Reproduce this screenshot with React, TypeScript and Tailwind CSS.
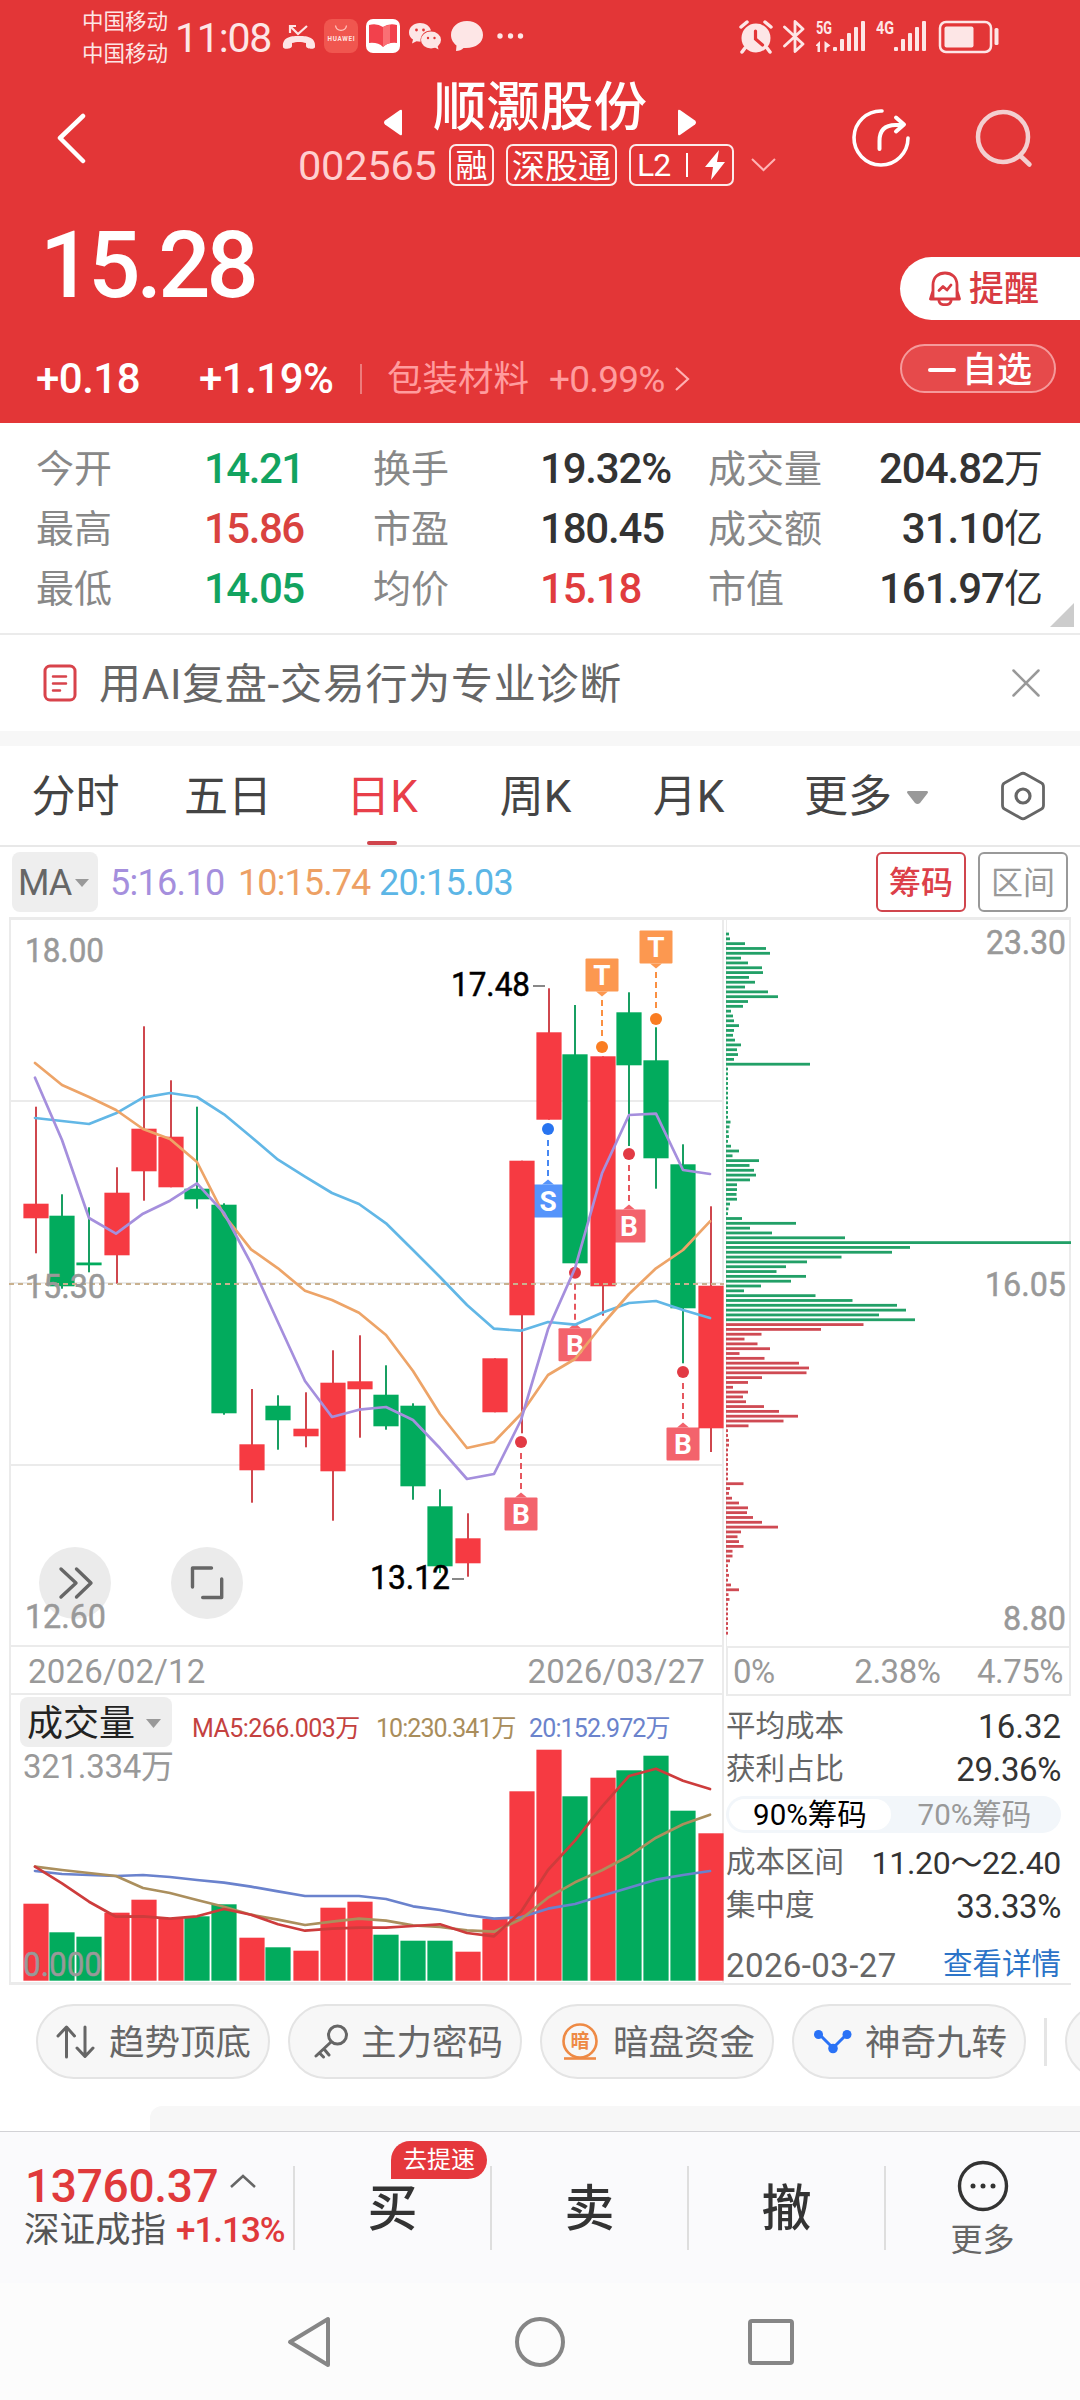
import React from 'react';

const RED = '#f63a42';
const GREEN = '#02ab5d';

const xAt = (i: number) => 35 + 27 * i;

const toPoints = (values: number[]) => values.map((y, i) => `${xAt(i)},${y}`).join(' ');

// [center x, high, body top, body bottom, low, up]
const candles: [number, number, number, number, number, boolean][] = [
  [36, 1106.7, 1203.7, 1218.3, 1253.3, true],
  [62, 1194.3, 1215.7, 1286.3, 1288.7, false],
  [89, 1207.3, 1262.5, 1265.3, 1272.3, false],
  [117, 1167.3, 1192.7, 1255.3, 1283.7, true],
  [144, 1026.3, 1128.7, 1171.3, 1200.7, true],
  [171, 1080.3, 1136.7, 1187.3, 1187.3, true],
  [197, 1106.7, 1188.7, 1199.3, 1208.7, false],
  [224, 1203.3, 1204.7, 1413.3, 1414.7, false],
  [252, 1389, 1444.3, 1470.3, 1502.7, true],
  [278, 1395.3, 1405.7, 1420.3, 1449.7, false],
  [306, 1392.3, 1428.7, 1436.3, 1447.3, true],
  [333, 1350.3, 1382.7, 1471.3, 1520.7, true],
  [360, 1335.3, 1381.3, 1389.3, 1437.7, true],
  [386, 1365.3, 1394.7, 1426.3, 1429.7, false],
  [413, 1403.3, 1405.7, 1486.3, 1499.7, false],
  [440, 1489.3, 1506.3, 1566.3, 1573, false],
  [468, 1513.3, 1538.3, 1563.3, 1576.7, true],
  [495, 1358.3, 1358.3, 1412.3, 1412.3, true],
  [522, 1160.7, 1160.7, 1315.3, 1433.3, true],
  [549, 988.3, 1032.3, 1119.7, 1119.7, true],
  [575, 1005, 1054.3, 1263.3, 1263.3, false],
  [603, 1056.3, 1056.3, 1286.3, 1315.7, true],
  [629, 992.3, 1012.3, 1065.3, 1146, false],
  [656, 1027.3, 1060.3, 1158.3, 1188.7, false],
  [683, 1144.3, 1164.3, 1308.3, 1363.3, false],
  [711, 1206.3, 1285.7, 1428.3, 1452, true],
];

const ma5 = [
  1077.7, 1140, 1218, 1233.7, 1213.7, 1200.7, 1183.3, 1213, 1263.3, 1322.3, 1381, 1417, 1409.7, 1407, 1420, 1448.3,
  1479, 1474, 1420, 1329.3, 1268.3, 1173.3, 1115, 1113.7, 1170, 1174,
];
const ma10 = [
  1063, 1085, 1097, 1110, 1129, 1139, 1162, 1215, 1249.3, 1268.3, 1290.7, 1300, 1312.7, 1335, 1371, 1414, 1448, 1442,
  1414, 1375, 1359, 1325, 1294, 1268.3, 1250, 1221.3,
];
const ma20 = [
  1118, 1121, 1124, 1113.3, 1097.7, 1093, 1097, 1114.3, 1136.7, 1159.7, 1176.7, 1193, 1204, 1223.3, 1250, 1277, 1305,
  1328.7, 1330.7, 1322, 1324.7, 1312.7, 1303, 1301, 1310, 1318,
];

const volumeTops = [
  1903.7, 1932.3, 1936.7, 1912.7, 1899.7, 1918.7, 1916.3, 1904.3, 1937.7, 1947.3, 1950.7, 1907.7, 1901.7, 1934.7,
  1940.7, 1940.7, 1951.7, 1918.7, 1791.3, 1749.7, 1796.3, 1777.7, 1770.3, 1755.7, 1810.7, 1833.3,
];
const vol5 = [
  1866.7, 1883.3, 1901.7, 1916.7, 1916.3, 1918.7, 1916.3, 1909, 1914.7, 1924.3, 1930.7, 1928.7, 1927.7, 1927.7, 1926,
  1924.3, 1933, 1936.3, 1911.7, 1870, 1840.7, 1806.7, 1776, 1768.7, 1780.7, 1789,
];
const vol10 = [
  1866.7, 1870, 1873, 1876, 1888, 1893, 1900, 1906.7, 1914.7, 1919.7, 1925, 1921.7, 1918.7, 1920.7, 1925.3, 1927,
  1930.3, 1931.7, 1919.3, 1897.7, 1882.3, 1870.3, 1856, 1837.7, 1824.3, 1814.7,
];
const vol20 = [
  1871, 1874, 1875, 1876, 1875, 1877, 1880, 1882.7, 1886.7, 1891.3, 1896, 1896, 1896, 1899, 1906.3, 1910, 1915,
  1918.7, 1917.3, 1908.7, 1904, 1895.7, 1887.7, 1879.7, 1875, 1871,
];

// widths of the cost distribution bars, top to bottom
const lossBars = [
  3, 4, 19, 40, 44, 15, 22, 36, 37, 23, 29, 19, 42, 52, 22, 17, 5, 7, 8, 13, 8, 7, 9, 15, 11, 12, 8, 84, 2, 2, 2, 2, 2,
  2, 2, 2, 2, 2, 2, 4.5, 3.5, 2.5, 3, 2, 5, 13, 6.5, 33, 23.5, 28, 30, 24, 11, 11, 10.5, 11, 4, 2.5, 2, 16, 70, 24,
  46, 119, 345, 184, 166, 115.5, 81, 60, 50.5, 80, 65, 35, 18, 89.5, 126.5, 171, 180, 153, 189,
];
const profitBars = [
  137.5, 95, 35.5, 18.5, 31.5, 44, 13.5, 38.5, 73, 83, 80.5, 36, 22, 7, 22, 17, 20, 38, 53, 72, 57.5, 22.5, 2, 2, 3, 3,
  2, 2, 2, 2, 2, 2, 2, 17.5, 4, 3, 6, 13, 22, 21, 27, 36, 52, 15, 11.5, 13, 17.5, 6.5, 6.5, 4, 2, 2, 3, 2, 5, 13, 2.5,
  3.5, 2, 2, 2, 2, 2, 2, 2,
];

interface MarkerProps {
  x: number;
  y: number;
  letter: string;
  dot: string;
  fill: string;
  above?: boolean;
}

const Marker: React.FC<MarkerProps> = ({ x, y, letter, dot, fill, above }) => {
  const dir = above ? -1 : 1;
  const edge = y + dir * 55.5;
  const top = above ? edge - 33 : edge;
  return (
    <g>
      <line x1={x} y1={y + dir * 11} x2={x} y2={y + dir * 50} stroke={dot} strokeWidth={2} strokeDasharray="6 4" opacity={0.85} />
      <circle cx={x} cy={y} r={6} fill={dot} />
      <rect x={x - 16.5} y={top} width={33} height={33} rx={1} fill={fill} />
      <path d={`M${x - 6} ${edge}L${x} ${edge - dir * 5}L${x + 6} ${edge}Z`} fill={fill} />
      <text x={x} y={top + 26.5} textAnchor="middle" fontSize={28} fontWeight={700} fill="#fff">
        {letter}
      </text>
    </g>
  );
};

interface AxisTextProps {
  x: number;
  y: number;
  width: number;
  children: string;
  fill?: string;
}

const AxisText: React.FC<AxisTextProps> = ({ x, y, width, children, fill = '#999' }) => (
  <text x={x - 2} y={y} textLength={width + 4} lengthAdjust="spacingAndGlyphs" fontSize={33} fill={fill} stroke={fill} strokeWidth={0.5}>
    {children}
  </text>
);

const StatusBar = () => (
  <div className="flex h-[72px] items-start text-[#fde6e6]">
    <div className="ml-[82px] mt-[6px] flex w-[88px] flex-col text-[21.5px] leading-[32px]">
      <span>中国移动</span>
      <span>中国移动</span>
    </div>
    <span className="ml-[5px] mt-[17px] w-[106px] text-[41px] leading-[42px] tracking-[-1.2px]">11:08</span>
    <svg className="mt-[19px]" width="40" height="34" viewBox="281 19 40 34" fill="none">
      <path d="M283 47c-1-11 10-11 16-11s17 0 16 11c0 3-9 2-9-1v-3c-4-1.500-10-1.500-14 0v3c0 3-9 4-9 1z" fill="#fde6e6" />
      <path d="M290 33v-7h6M291 27l7 7 9-8" stroke="#fde6e6" strokeWidth="2.200" />
    </svg>
    <svg className="ml-[3px] mt-[19px]" width="34" height="34" viewBox="0 0 34 34">
      <rect width="34" height="34" rx="8" fill="#f0564f" />
      <path d="M11.500 6.500c1 6.500 10 6.500 11 0" fill="none" stroke="#ffc5bd" strokeWidth="1.300" />
      <text x="3.500" y="22" fontSize="6.300" fontWeight="700" fill="#ffe4e0" textLength="27">
        HUAWEI
      </text>
    </svg>
    <svg className="ml-[8px] mt-[19px]" width="34" height="34" viewBox="0 0 34 34">
      <rect width="34" height="34" rx="7" fill="#fff" />
      <path d="M3 6q8-2 14 2q6-4 14-2v18q-9-1-14 4q-5-5-14-4z" fill="#f2414c" />
      <path d="M17 8v20q4-3.500 7-4V6q-4 0-7 2z" fill="#fa6f74" />
    </svg>
    <svg className="ml-[9px] mt-[21px]" width="33" height="30" viewBox="0 0 33 30">
      <path d="M11 2C5 2 0 6 0 11.500c0 3 1.500 5.500 4 7l-1 4 4.500-2.300 4 .5C11 14 16 9.500 22 9.500 21 5 16.500 2 11 2z" fill="#fde6e6" />
      <ellipse cx="22" cy="19" rx="10" ry="8.500" fill="#fde6e6" />
      <path d="M25 26l4.500 2.500-1-4z" fill="#fde6e6" />
      <circle cx="7.500" cy="9" r="1.400" fill="#e33637" />
      <circle cx="14.500" cy="9" r="1.400" fill="#e33637" />
      <circle cx="19" cy="17" r="1.200" fill="#e33637" />
      <circle cx="25.500" cy="17" r="1.200" fill="#e33637" />
    </svg>
    <svg className="ml-[9px] mt-[21px]" width="33" height="32" viewBox="0 0 33 32">
      <path d="M16 0C7 0 0 6 0 14c0 5 3 8.500 5.500 10.500L5 30c3 0 6-1 7.500-3C24 28 32 22 32 14S25 0 16 0z" fill="#fde6e6" />
    </svg>
    <svg className="ml-[13px] mt-[32px]" width="28" height="8" fill="#fde6e6">
      <circle cx="3" cy="4" r="2.700" />
      <circle cx="13.500" cy="4" r="2.700" />
      <circle cx="23.500" cy="4" r="2.700" />
    </svg>
    <svg className="ml-auto mt-[19px]" width="34" height="35" viewBox="0 0 34 35">
      <circle cx="17" cy="19" r="14.500" fill="#fde6e6" />
      <path d="M2 8l6-5M32 8l-6-5M6 29l-3 4M28 29l3 4" stroke="#fde6e6" strokeWidth="3.500" strokeLinecap="round" />
      <path d="M16.500 12v8l7 6" fill="none" stroke="#e33637" strokeWidth="3.200" strokeLinecap="round" />
    </svg>
    <svg className="ml-[10px] mt-[19px]" width="22" height="35" viewBox="0 0 22 35" fill="none">
      <path d="M1.500 8l18.500 17-8 7.500V2.500l8 7.500L1.500 27" stroke="#fde6e6" strokeWidth="2.800" strokeLinejoin="round" strokeLinecap="round" />
    </svg>
    <svg className="ml-[11px] mt-[12px]" width="50" height="42" viewBox="816 12 50 42" fill="#fde6e6">
      <text x="816" y="34" fontSize="18" fontWeight="700" textLength="16" lengthAdjust="spacingAndGlyphs">
        5G
      </text>
      <path d="M820 41v11h-2.500v-6H815zM824.500 41v11h2v-4l4-2.500z" />
      <rect x="833" y="47" width="4" height="4" rx="1" />
      <rect x="840" y="39" width="4" height="12" rx="1" />
      <rect x="847" y="33" width="4" height="18" rx="1" />
      <rect x="854" y="27" width="4" height="24" rx="1" />
      <rect x="861" y="21" width="4" height="30" rx="1" />
    </svg>
    <svg className="ml-[10px] mt-[12px]" width="51" height="42" viewBox="876 12 51 42" fill="#fde6e6">
      <text x="876" y="34" fontSize="18" fontWeight="700" textLength="18" lengthAdjust="spacingAndGlyphs">
        4G
      </text>
      <rect x="894" y="47" width="4" height="4" rx="1" />
      <rect x="901" y="39" width="4" height="12" rx="1" />
      <rect x="908" y="33" width="4" height="18" rx="1" />
      <rect x="915" y="27" width="4" height="24" rx="1" />
      <rect x="922" y="21" width="4" height="30" rx="1" />
    </svg>
    <svg className="ml-[11px] mr-[80px] mt-[19px]" width="62" height="35" viewBox="938 19 62 35">
      <rect x="940" y="22" width="51" height="30" rx="6" fill="none" stroke="#fde6e6" strokeWidth="2.500" />
      <rect x="944.500" y="26.500" width="29" height="21" rx="2" fill="#fde6e6" />
      <rect x="994.500" y="28" width="4" height="17" rx="1.500" fill="#fde6e6" />
    </svg>
  </div>
);

const TitleBar = () => (
  <div className="flex h-[128px] text-white">
    <svg className="ml-[56px] mt-[40px]" width="32" height="52" viewBox="56 112 32 52" fill="none">
      <path d="M83 116L60 138l23 23" stroke="#fff" strokeWidth="4.500" strokeLinecap="round" strokeLinejoin="round" />
    </svg>
    <div className="ml-[212px] flex w-[476px] flex-col">
      <div className="flex h-[68px] items-center">
        <svg className="ml-[84px] mt-[32px]" width="18" height="27" viewBox="0 0 18 27">
          <path d="M18 2v23q0 2-2 1L1 15.500q-2-2 0-4L16 1q2-1 2 1z" fill="#fff" />
        </svg>
        <span className="ml-[31px] mt-[3px] text-[53.500px] font-medium leading-[68px]">顺灏股份</span>
        <svg className="ml-[31px] mt-[32px]" width="18" height="27" viewBox="0 0 18 27">
          <path d="M0 2v23q0 2 2 1l15-10.500q2-2 0-4L2 1Q0 0 0 2z" fill="#fff" />
        </svg>
      </div>
      <div className="mt-[4px] flex h-[42px] items-center">
        <span className="-ml-[2px] mt-[1px] w-[151px] text-[41.500px] leading-[42px] tracking-[-0.200px] text-[#ffcfd0]">002565</span>
        <span className="flex h-[42px] w-[45px] items-center justify-center rounded-[7px] border-2 border-white/90 pt-[2px] text-[32px] leading-none">融</span>
        <span className="ml-[12px] flex h-[42px] w-[111px] items-center justify-center rounded-[7px] border-2 border-white/90 pt-[2px] text-[33px] leading-none">深股通</span>
        <span className="ml-[12px] flex h-[42px] w-[105px] items-center rounded-[7px] border-2 border-white/90 pl-[6px] text-[32px] leading-none tracking-[-1px]">
          L2
          <i className="ml-[16px] h-[24px] w-[2px] bg-white" />
          <svg className="ml-[17px]" width="20" height="30" viewBox="0 0 20 30">
            <path d="M14 0L0 17h8L6 30 20 12h-8z" fill="#fff" />
          </svg>
        </span>
        <svg className="ml-[17px]" width="25" height="14" viewBox="0 0 25 14" fill="none">
          <path d="M1 1l11.500 11L24 1" stroke="#ffb3b4" strokeWidth="2" />
        </svg>
      </div>
    </div>
    <svg className="ml-[74px] mt-[34px]" width="64" height="64" viewBox="850 106 64 64" fill="none" stroke="#fff" strokeLinecap="round" strokeLinejoin="round">
      <path d="M882 111a27 27 0 1 0 26 27" strokeWidth="3.600" />
      <path d="M879.500 149v-8q0-16 16-16h7M896 117.500l8 7-8 7" strokeWidth="4" />
    </svg>
    <svg className="ml-[60px] mt-[34px]" width="62" height="64" viewBox="974 106 62 64" fill="none" stroke="#f3cfd0" strokeWidth="4.500">
      <circle cx="1003" cy="137" r="25" />
      <path d="M1020 155.500l9.500 9" strokeLinecap="round" />
    </svg>
  </div>
);

const Header = () => (
  <header className="flex h-[423px] flex-col bg-[#e33637]">
    <StatusBar />
    <TitleBar />
    <div className="flex justify-between text-white">
      <div className="flex flex-col">
        <span className="ml-[40px] mt-[19px] h-[93px] text-[92px] font-medium leading-[93px] tracking-[-4px]">15.28</span>
        <div className="mt-[45px] flex h-[44px] items-center whitespace-nowrap text-[42px] font-medium leading-none">
          <span className="ml-[36px] w-[163px] tracking-[-0.5px]">+0.18</span>
          <span className="w-[161px] tracking-[-0.5px]">+1.19%</span>
          <i className="h-[30px] w-[2px] bg-white/35" />
          <span className="ml-[25px] mt-[1px] text-[35.500px] font-normal text-[#ff9c9e]">包装材料</span>
          <span className="ml-[20px] text-[37px] font-normal tracking-[-0.800px] text-[#ff9c9e]">+0.99%</span>
          <svg className="ml-[11px]" width="15" height="24" viewBox="0 0 15 24" fill="none">
            <path d="M1 1l12 11L1 23" stroke="#ffb0b2" strokeWidth="2.200" />
          </svg>
        </div>
      </div>
      <div className="flex w-[180px] flex-col">
        <div className="mt-[57px] flex h-[63px] items-center rounded-l-full bg-white pl-[29px] text-[#d83b42]">
          <svg width="32" height="35" viewBox="0 0 32 35" fill="none" stroke="#d83b42" strokeWidth="2.800" strokeLinejoin="round" strokeLinecap="round">
            <path d="M4 27V14C4 6 9.500 2 16 2s12 4 12 12v13M4 20l-2.500 8h29L28 20M10 30c1 5 11 5 12 0" />
            <path d="M10 19.500l4-4 4 3.500 4-5" />
          </svg>
          <span className="ml-[8px] mt-[2px] text-[35px] font-medium leading-none">提醒</span>
        </div>
        <div className="mt-[24px] flex h-[49px] w-[156px] items-center rounded-full border-2 border-[#f59a9b] bg-white/10 pl-[26px]">
          <i className="mt-[2px] h-[4px] w-[28px] rounded bg-white" />
          <span className="ml-[6px] mt-[3px] text-[35px] font-medium leading-none">自选</span>
        </div>
      </div>
    </div>
  </header>
);

const stats = [
  { a: '今开', av: '14.21', ac: 'text-[#12a360]', b: '换手', bv: '19.32%', bc: 'text-[#333]', c: '成交量', cv: '204.82万' },
  { a: '最高', av: '15.86', ac: 'text-[#d9423f]', b: '市盈', bv: '180.45', bc: 'text-[#333]', c: '成交额', cv: '31.10亿' },
  { a: '最低', av: '14.05', ac: 'text-[#12a360]', b: '均价', bv: '15.18', bc: 'text-[#e03c3e]', c: '市值', cv: '161.97亿' },
];

const Stats = () => (
  <section className="flex h-[212px] flex-col border-b-2 border-[#ebebeb] pt-[16px]">
    {stats.map((s) => (
      <div key={s.a} className="flex h-[60px] items-center whitespace-nowrap text-[38px] leading-none text-[#888]">
        <span className="ml-[36px] w-[168px]">{s.a}</span>
        <span className={`w-[169px] text-[42px] font-medium tracking-[-1.500px] ${s.ac}`}>{s.av}</span>
        <span className="w-[167px]">{s.b}</span>
        <span className={`w-[168px] text-[42px] font-medium tracking-[-1.200px] ${s.bc}`}>{s.bv}</span>
        <span>{s.c}</span>
        <span className="ml-auto mr-[38px] flex items-center text-[42px] font-medium tracking-[-1px] text-[#333]">
          {s.cv.slice(0, -1)}
          <span className="text-[39px] font-normal">{s.cv.slice(-1)}</span>
        </span>
      </div>
    ))}
    <svg className="-mt-[16px] ml-[1050px]" width="24" height="24">
      <path d="M24 0v24H0z" fill="#ccc" />
    </svg>
  </section>
);

const Notice = () => (
  <section className="flex h-[111px] items-center border-b-[15px] border-[#f7f7f7]">
    <svg className="ml-[43px]" width="34" height="38" viewBox="0 0 34 38" fill="none" stroke="#d8434b" strokeWidth="3" strokeLinecap="round">
      <rect x="2" y="2" width="30" height="34" rx="5" />
      <path d="M10 12.500h13M10 19.500h13M10 26.500h7" strokeWidth="2.500" />
    </svg>
    <span className="ml-[22px] mt-[3px] text-[42px] leading-none tracking-[0.750px] text-[#666]">用AI复盘-交易行为专业诊断</span>
    <svg className="ml-auto mr-[40px]" width="28" height="28" viewBox="0 0 28 28">
      <path d="M1.500 1.500l25 25M26.500 1.500l-25 25" stroke="#999" strokeWidth="2.500" strokeLinecap="round" />
    </svg>
  </section>
);

const Tabs = () => (
  <nav className="flex h-[101px] items-stretch border-b-2 border-[#e8e8e8] text-[44px] leading-none text-[#444]">
    <span className="flex w-[151px] items-center justify-center pt-[3px]">分时</span>
    <span className="flex w-[154px] items-center justify-center pt-[3px]">五日</span>
    <span className="flex w-[154px] flex-col items-center text-[#e83f49]">
      <span className="flex flex-1 items-center pt-[6px]">日K</span>
      <i className="h-[4px] w-[30px] rounded-full bg-[#d0444c]" />
    </span>
    <span className="flex w-[153px] items-center justify-center pt-[3px]">周K</span>
    <span className="flex w-[153px] items-center justify-center pt-[3px]">月K</span>
    <span className="ml-[39px] flex items-center pt-[3px]">
      更多
      <svg className="ml-[15px]" width="21" height="13" viewBox="0 0 21 13">
        <path d="M1 0h19q2 1 0 3l-7 9q-2.500 2-5 0L1 3Q-1 1 1 0z" fill="#999" />
      </svg>
    </span>
    <svg className="ml-auto mr-[34px] mt-[25px]" width="46" height="50" viewBox="0 0 46 50" fill="none" stroke="#666" strokeWidth="2.800">
      <path d="M20.500 3q2.500-1.500 5 0l16 9q2 1 2 4v18q0 3-2 4l-16 9q-2.500 1.500-5 0l-16-9q-2-1-2-4V16q0-3 2-4z" />
      <circle cx="23" cy="25" r="7" strokeWidth="3.200" />
    </svg>
  </nav>
);

const MaBar = () => (
  <div className="flex h-[70px] items-center whitespace-nowrap text-[36px] leading-none">
    <span className="ml-[12px] flex h-[60px] w-[86px] items-center rounded-lg bg-[#eee] pl-[6px] pt-[1px] tracking-[-1px] text-[#666]">
      MA
      <svg className="ml-[4px]" width="14" height="8">
        <path d="M0 0h14L7 8z" fill="#999" />
      </svg>
    </span>
    <span className="ml-[12px] mt-[2px] w-[128px] tracking-[-0.700px] text-[#a58fdd]">5:16.10</span>
    <span className="mt-[2px] w-[141px] tracking-[-0.900px] text-[#eda064]">10:15.74</span>
    <span className="mt-[2px] tracking-[-0.700px] text-[#5cb6e6]">20:15.03</span>
    <span className="ml-auto flex h-[60px] w-[90px] items-center justify-center rounded-md border-2 border-[#d0454d] pt-[2px] text-[32px] font-medium text-[#dc4049]">
      筹码
    </span>
    <span className="ml-[12px] mr-[12px] flex h-[60px] w-[90px] items-center justify-center rounded-md border-2 border-[#999] pt-[2px] text-[32px] text-[#999]">
      区间
    </span>
  </div>
);

const KLineChart = () => (
  <svg className="block shrink-0" width="724" height="730" viewBox="0 917 724 730">
    <rect x="9" y="917" width="715" height="3" fill="#ebebeb" />
    <rect x="9" y="917" width="2" height="730" fill="#ebebeb" />
    <rect x="722" y="917" width="2" height="730" fill="#ebebeb" />
    {[1100, 1282, 1464, 1645].map((y) => (
      <rect key={y} x="9" y={y} width="715" height="2" fill="#ebebeb" />
    ))}
    <Marker x={602} y={1047} letter="T" dot="#fa7d22" fill="#fc9850" above />
    <Marker x={656} y={1019} letter="T" dot="#fa7d22" fill="#fc9850" above />
    <Marker x={548} y={1129} letter="S" dot="#2874f0" fill="#5594fb" />
    <Marker x={629} y={1154} letter="B" dot="#e23a44" fill="#f3636c" />
    <Marker x={575} y={1272.7} letter="B" dot="#e23a44" fill="#f3636c" />
    <Marker x={521} y={1442} letter="B" dot="#e23a44" fill="#f3636c" />
    <Marker x={683} y={1372} letter="B" dot="#e23a44" fill="#f3636c" />
    {candles.map(([x, high, top, bottom, low, up]) => (
      <g key={x}>
        <rect x={x - 1} y={high} width={2} height={low - high} fill={up ? '#cf474e' : '#189f62'} />
        <rect x={x - 12.6} y={top} width={25.2} height={bottom - top} fill={up ? RED : GREEN} />
      </g>
    ))}
    <line x1="9" y1="1284" x2="724" y2="1284" stroke="#c9b18f" strokeWidth="2" strokeDasharray="5 4" />
    <g fill="none" strokeWidth="2.700" strokeLinejoin="round" strokeLinecap="round">
      <polyline points={toPoints(ma20)} stroke="#62b7e6" />
      <polyline points={toPoints(ma10)} stroke="#eda468" />
      <polyline points={toPoints(ma5)} stroke="#a58fdd" />
    </g>
    <AxisText x={453} y={996} width={75} fill="#000">17.48</AxisText>
    <rect x="533" y="985" width="12" height="2" fill="#888" />
    <AxisText x={372} y={1589} width={76} fill="#000">13.12</AxisText>
    <rect x="452" y="1578" width="12" height="2" fill="#888" />
    <g>
      <circle cx="75" cy="1583" r="36" fill="#ebebeb" />
      <circle cx="207" cy="1583" r="36" fill="#ebebeb" />
      <g fill="none" stroke="#666" strokeWidth="3.400" strokeLinecap="round" strokeLinejoin="round">
        <path d="M61 1569l15 14-15 14M76.500 1569l14.500 14-14.500 14" />
        <path d="M192.500 1587v-19h19M221.700 1579v18.500h-19" />
      </g>
    </g>
    <AxisText x={27} y={962} width={75}>18.00</AxisText>
    <AxisText x={27} y={1298} width={77}>15.30</AxisText>
    <AxisText x={27} y={1628} width={77}>12.60</AxisText>
  </svg>
);

const VolumeChart = () => (
  <svg className="block" width="724" height="236" viewBox="0 1749 724 236">
    <rect x="9" y="1749" width="2" height="235" fill="#ebebeb" />
    <rect x="722" y="1749" width="2" height="235" fill="#ebebeb" />
    <rect x="9" y="1982" width="715" height="3" fill="#ebebeb" />
    {volumeTops.map((top, i) => (
      <rect key={i} x={candles[i][0] - 12.6} y={top} width={25.2} height={1980.7 - top} fill={candles[i][5] ? RED : GREEN} />
    ))}
    <g fill="none" strokeWidth="2.700" strokeLinejoin="round" strokeLinecap="round">
      <polyline points={toPoints(vol20)} stroke="#6a82cd" />
      <polyline points={toPoints(vol10)} stroke="#ab8f5d" />
      <polyline points={toPoints(vol5)} stroke="#cd3c3c" />
    </g>
    <AxisText x={25} y={1976} width={75}>0.000</AxisText>
  </svg>
);

const CostChart = () => (
  <svg className="block shrink-0" width="356" height="731" viewBox="724 917 356 731">
    <rect x="724" y="917" width="347" height="3" fill="#ebebeb" />
    <rect x="726" y="917" width="1" height="731" fill="#ebebeb" />
    <rect x="1069" y="917" width="2" height="731" fill="#ebebeb" />
    <rect x="726" y="1646" width="345" height="2" fill="#ebebeb" />
    {[...lossBars, ...profitBars].map((w, i) => (
      <rect key={i} x="726" y={932.6 + i * 4.822} width={w} height={2.8} fill={i < lossBars.length ? '#22a067' : '#cf4a53'} />
    ))}
    <AxisText x={988} y={954} width={76}>23.30</AxisText>
    <AxisText x={987} y={1296} width={77}>16.05</AxisText>
    <AxisText x={1005} y={1630} width={59}>8.80</AxisText>
  </svg>
);

const CostDetails = () => (
  <div className="mr-[10px] flex flex-1 flex-col pt-[9px] text-[29.500px] leading-none text-[#666]">
    <div className="flex h-[43px] items-center justify-between">
      <span>平均成本</span>
      <span className="text-[33px] text-[#333]">16.32</span>
    </div>
    <div className="flex h-[43px] items-center justify-between">
      <span>获利占比</span>
      <span className="text-[33px] tracking-[-0.400px] text-[#333]">29.36%</span>
    </div>
    <div className="mt-[5px] flex h-[37px] items-center rounded-full bg-[#f2f6fa] p-[3px]">
      <span className="flex h-[31px] w-[162px] items-center justify-center rounded-full bg-white pt-[2px] text-black">90%筹码</span>
      <span className="flex flex-1 items-center justify-center pt-[2px] text-[#999]">70%筹码</span>
    </div>
    <div className="mt-[8px] flex h-[43px] items-center justify-between pt-[1px]">
      <span>成本区间</span>
      <span className="text-[32px] tracking-[-0.300px] text-[#333]">11.20～22.40</span>
    </div>
    <div className="flex h-[43px] items-center justify-between pt-[1px]">
      <span>集中度</span>
      <span className="text-[33px] tracking-[-0.400px] text-[#333]">33.33%</span>
    </div>
    <div className="mt-[19px] flex h-[36px] items-center justify-between whitespace-nowrap pt-[2px]">
      <span className="text-[33px] tracking-[0.400px]">2026-03-27</span>
      <span className="text-[#2c74c8]">查看详情</span>
    </div>
  </div>
);

const ChartArea = () => (
  <section className="flex h-[1068px]">
    <div className="flex w-[724px] flex-col">
      <KLineChart />
      <div className="ml-[9px] flex h-[48px] shrink-0 items-center justify-between border-x-2 border-b-2 border-[#ebebeb] pl-[17px] pr-[17px] pt-[2px] text-[33px] leading-none tracking-[0.200px] text-[#999]">
        <span>2026/02/12</span>
        <span>2026/03/27</span>
      </div>
      <div className="ml-[9px] flex h-[54px] items-center whitespace-nowrap border-x-2 border-[#ebebeb] text-[25px] leading-none">
        <span className="ml-[9px] flex h-[50px] w-[152px] items-center rounded-lg bg-[#eee] pl-[7px] pt-[3px] text-[36px] text-[#222]">
          成交量
          <svg className="ml-[11px]" width="15" height="9">
            <path d="M0 0h15L7.500 9z" fill="#999" />
          </svg>
        </span>
        <span className="ml-[20px] mt-[12px] w-[184px] tracking-[-0.550px] text-[#c4413f]">MA5:266.003万</span>
        <span className="mt-[12px] w-[153px] tracking-[-0.950px] text-[#a98d5b]">10:230.341万</span>
        <span className="mt-[12px] tracking-[-0.850px] text-[#6b83cc]">20:152.972万</span>
      </div>
      <div className="relative">
        <VolumeChart />
        <span className="absolute left-[23px] top-[1px] text-[33px] leading-none tracking-[-0.300px] text-[#999]">321.334万</span>
      </div>
    </div>
    <div className="flex w-[356px] flex-col">
      <CostChart />
      <div className="ml-[2px] flex h-[48px] w-[345px] shrink-0 items-center justify-between border-x-2 border-b-2 border-[#ebebeb] pl-[5px] pr-[6px] pt-[1px] text-[33px] leading-none tracking-[-0.500px] text-[#999]">
        <span>0%</span>
        <span className="ml-[43px]">2.38%</span>
        <span>4.75%</span>
      </div>
      <div className="mr-[9px] flex flex-1 border-b-2 border-[#e8e8e8] pl-[2px]">
        <CostDetails />
      </div>
    </div>
  </section>
);

const pill = 'flex h-[75px] w-[234px] shrink-0 items-center rounded-full border-2 border-[#e4e4e4] bg-[#f7f7f7]';

const QuickLinks = () => (
  <div className="mt-[19px] flex h-[75px] items-center overflow-hidden whitespace-nowrap pl-[36px] text-[35.500px] leading-none text-[#666]">
    <span className={pill}>
      <svg className="ml-[18px]" width="40" height="34" viewBox="0 0 40 34" fill="none" stroke="#666" strokeWidth="3" strokeLinecap="round" strokeLinejoin="round">
        <path d="M10.500 32V3M2 11l8.500-9 8 9M29 2v29M21 23l8 8.500 8-8.500" />
      </svg>
      <span className="ml-[13px] mt-[5px]">趋势顶底</span>
    </span>
    <span className={`ml-[18px] ${pill}`}>
      <svg className="ml-[24px]" width="35" height="35" viewBox="0 0 35 35" fill="none" stroke="#666" strokeWidth="3" strokeLinecap="round">
        <circle cx="23.500" cy="11" r="9" />
        <path d="M17 18L2 32M10 25l5 6M5.500 29l4 4" />
      </svg>
      <span className="ml-[12px] mt-[5px]">主力密码</span>
    </span>
    <span className={`ml-[18px] ${pill}`}>
      <svg className="ml-[19px]" width="38" height="38" viewBox="0 0 38 38">
        <circle cx="19" cy="18" r="16.500" fill="none" stroke="#ee8a45" strokeWidth="2.600" />
        <path d="M3 35.500h32" stroke="#ee8a45" strokeWidth="2.600" />
        <text x="19" y="25" textAnchor="middle" fontSize="19" fontWeight="700" fill="#ee8a45">
          暗
        </text>
      </svg>
      <span className="ml-[14px] mt-[5px]">暗盘资金</span>
    </span>
    <span className={`ml-[18px] ${pill}`}>
      <svg className="ml-[19px]" width="40" height="26" viewBox="0 0 40 26" fill="#2a72f6">
        <path d="M6 5l14 14L34 5" fill="none" stroke="#2a72f6" strokeWidth="3" />
        <circle cx="5.500" cy="5.500" r="4.500" />
        <circle cx="20" cy="19.500" r="4.800" />
        <circle cx="34" cy="5.500" r="4.500" />
      </svg>
      <span className="ml-[12px] mt-[5px]">神奇九转</span>
    </span>
    <i className="ml-[18px] h-[48px] w-[3px] shrink-0 bg-[#e5e5e5]" />
    <span className={`ml-[18px] ${pill}`} />
  </div>
);

const TradeBar = () => (
  <footer className="flex h-[152px] items-center border-t border-[#d2d2d6] bg-[#fafafc] text-[50px] font-medium leading-none text-[#333]">
    <div className="flex w-[293px] flex-col whitespace-nowrap pl-[24px] font-normal text-[#e0393b]">
      <div className="flex h-[46px] items-center">
        <span className="ml-[1px] text-[46px] font-medium tracking-[-0.300px]">13760.37</span>
        <svg className="-mt-[10px] ml-[12px]" width="26" height="14" viewBox="0 0 26 14" fill="none">
          <path d="M1 13L13 2l12 11" stroke="#666" strokeWidth="2.500" />
        </svg>
      </div>
      <div className="flex h-[44px] items-center text-[35.500px]">
        <span className="text-[#555]">深证成指</span>
        <span className="ml-[10px] text-[35px] font-medium tracking-[-1px]">+1.13%</span>
      </div>
    </div>
    <i className="h-[84px] w-[2px] bg-[#dedede]" />
    <span className="relative flex h-full w-[195px] items-center justify-center pt-[3px]">
      买
      <span className="absolute left-[96px] top-[9px] flex h-[38px] w-[96px] items-center justify-center rounded-full rounded-bl-none bg-[#e5383d] text-[24px] font-normal text-white">
        去提速
      </span>
    </span>
    <i className="h-[84px] w-[2px] bg-[#dedede]" />
    <span className="flex w-[195px] justify-center pt-[3px]">卖</span>
    <i className="h-[84px] w-[2px] bg-[#dedede]" />
    <span className="flex w-[195px] justify-center pt-[3px]">撤</span>
    <i className="h-[84px] w-[2px] bg-[#dedede]" />
    <span className="flex flex-1 flex-col items-center pr-[1px] pt-[1px] text-[32px] font-normal text-[#666]">
      <svg width="52" height="52" viewBox="0 0 52 52" fill="#333">
        <circle cx="26" cy="26" r="23.500" fill="none" stroke="#333" strokeWidth="3.400" />
        <circle cx="16" cy="26" r="2.500" />
        <circle cx="26" cy="26" r="2.500" />
        <circle cx="36" cy="26" r="2.500" />
      </svg>
      <span className="mt-[12px]">更多</span>
    </span>
  </footer>
);

const NavBar = () => (
  <div className="flex h-[117px] items-center justify-between bg-[#fcfcfc] px-[286px]">
    <svg width="46" height="54" viewBox="0 0 46 54" fill="none" stroke="#868686" strokeWidth="4" strokeLinejoin="round">
      <path d="M42 4v46L4 27z" />
    </svg>
    <svg width="52" height="52" viewBox="0 0 52 52" fill="none" stroke="#868686" strokeWidth="4">
      <circle cx="26" cy="26" r="23" />
    </svg>
    <svg width="46" height="46" viewBox="0 0 46 46" fill="none" stroke="#868686" strokeWidth="4">
      <rect x="2" y="2" width="42" height="42" rx="2" />
    </svg>
  </div>
);

const App: React.FC = () => (
  <div className="h-[2400px] w-[1080px] overflow-hidden bg-white font-[Roboto,'Noto_Sans_CJK_SC',sans-serif]">
    <Header />
    <Stats />
    <Notice />
    <Tabs />
    <MaBar />
    <ChartArea />
    <QuickLinks />
    <div className="ml-[150px] mt-[27px] h-[25px] rounded-tl-xl bg-[#f7f7f7]" />
    <TradeBar />
    <NavBar />
  </div>
);

export default App;
